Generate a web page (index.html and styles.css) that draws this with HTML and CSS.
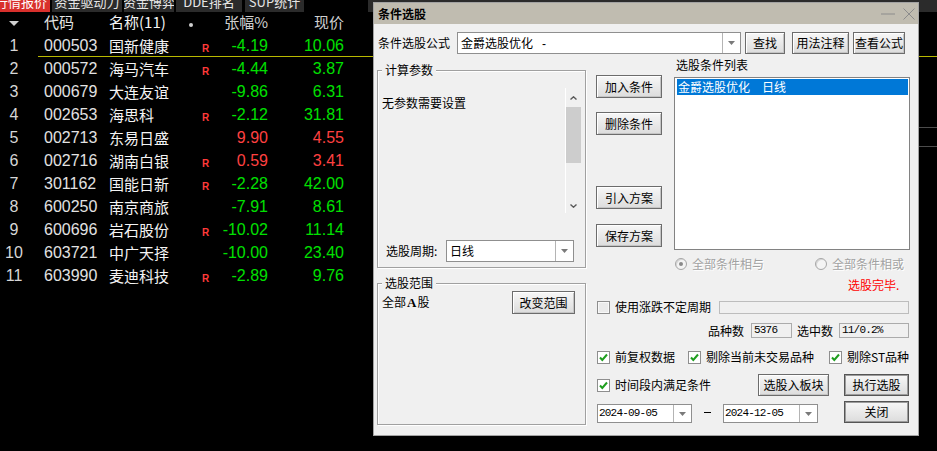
FILE: index.html
```html
<!DOCTYPE html>
<html lang="zh-CN">
<head>
<meta charset="utf-8">
<title>条件选股</title>
<link rel="stylesheet" href="styles.css">
</head>
<body>
<div class="screen">
  <div class="tabbar">
    <div class="tab tab-red w50"><span>行情报价</span></div>
    <div class="tab w70"><span>资金驱动力</span></div>
    <div class="tab w50"><span>资金博弈</span></div>
    <div class="tab w66"><span>DDE排名</span></div>
    <div class="tab w59"><span>SUP统计</span></div>
    <div class="tab-fill"></div>
  </div>

  <div class="content">
    <div class="quotes">
      <div class="qhead">
        <div class="c-idx"><svg class="sort" width="10" height="6" viewBox="0 0 10 6"><path d="M0 0H10L5 5Z" fill="#d0d0d0"/></svg></div>
        <div class="c-code">代码</div>
        <div class="c-name">名称(11)</div>
        <div class="c-r"><span class="dot"></span></div>
        <div class="c-chg">张幅%</div>
        <div class="c-price">现价</div>
      </div>

      <div class="qrow first"><div class="c-idx">1</div><div class="c-code">000503</div><div class="c-name">国新健康</div><div class="c-r">R</div><div class="c-chg dn">-4.19</div><div class="c-price dn">10.06</div></div>
      <div class="selline"></div>
      <div class="qrow"><div class="c-idx">2</div><div class="c-code">000572</div><div class="c-name">海马汽车</div><div class="c-r">R</div><div class="c-chg dn">-4.44</div><div class="c-price dn">3.87</div></div>
      <div class="qrow"><div class="c-idx">3</div><div class="c-code">000679</div><div class="c-name">大连友谊</div><div class="c-r"></div><div class="c-chg dn">-9.86</div><div class="c-price dn">6.31</div></div>
      <div class="qrow"><div class="c-idx">4</div><div class="c-code">002653</div><div class="c-name">海思科</div><div class="c-r">R</div><div class="c-chg dn">-2.12</div><div class="c-price dn">31.81</div></div>
      <div class="qrow"><div class="c-idx">5</div><div class="c-code">002713</div><div class="c-name">东易日盛</div><div class="c-r"></div><div class="c-chg up">9.90</div><div class="c-price up">4.55</div></div>
      <div class="qrow"><div class="c-idx">6</div><div class="c-code">002716</div><div class="c-name">湖南白银</div><div class="c-r">R</div><div class="c-chg up">0.59</div><div class="c-price up">3.41</div></div>
      <div class="qrow"><div class="c-idx">7</div><div class="c-code">301162</div><div class="c-name">国能日新</div><div class="c-r">R</div><div class="c-chg dn">-2.28</div><div class="c-price dn">42.00</div></div>
      <div class="qrow"><div class="c-idx">8</div><div class="c-code">600250</div><div class="c-name">南京商旅</div><div class="c-r"></div><div class="c-chg dn">-7.91</div><div class="c-price dn">8.61</div></div>
      <div class="qrow"><div class="c-idx">9</div><div class="c-code">600696</div><div class="c-name">岩石股份</div><div class="c-r">R</div><div class="c-chg dn">-10.02</div><div class="c-price dn">11.14</div></div>
      <div class="qrow"><div class="c-idx">10</div><div class="c-code">603721</div><div class="c-name">中广天择</div><div class="c-r"></div><div class="c-chg dn">-10.00</div><div class="c-price dn">23.40</div></div>
      <div class="qrow"><div class="c-idx">11</div><div class="c-code">603990</div><div class="c-name">麦迪科技</div><div class="c-r">R</div><div class="c-chg dn">-2.89</div><div class="c-price dn">9.76</div></div>
    </div>
    <div class="panel">
      <div class="pl-yellow"></div>
      <div class="pl-grey g1"></div>
      <div class="pl-grey g2"></div>
    </div>
  </div>

  <div class="dialog">
    <div class="dtitle">
      <span class="dtitle-text">条件选股</span>
      <div class="dctrls">
        <svg width="14" height="2" viewBox="0 0 14 2"><path d="M0 1H14" stroke="#8c8c8c" stroke-width="1"/></svg>
        <svg class="dclose" width="12" height="12" viewBox="0 0 12 12"><path d="M0.5 0.5L11.5 11.5M11.5 0.5L0.5 11.5" stroke="#8c8c8c" stroke-width="1"/></svg>
      </div>
    </div>

    <div class="dbody">
      <div class="rowa">
        <div class="lbl-formula">条件选股公式</div>
        <div class="combo w284">
          <div class="cv">金爵选股优化<span class="fdash">-</span></div>
          <div class="cd"><svg width="7" height="4" viewBox="0 0 7 4"><path d="M0 0H7L3.5 4Z" fill="#7a7a7a"/></svg></div>
        </div>
        <div class="btn b-find">查找</div>
        <div class="btn b-usage">用法注释</div>
        <div class="btn b-view">查看公式</div>
      </div>

      <div class="dmain">
        <div class="lcol">
          <div class="gb gb1">
            <div class="legend">计算参数</div>
            <div class="params">
              <div class="ptext">无参数需要设置</div>
              <div class="scroll">
                <div class="sc-up"><svg width="7" height="4" viewBox="0 0 7 4"><path d="M0.5 3.5L3.5 0.8L6.5 3.5" stroke="#5a5a5a" stroke-width="1.4" fill="none"/></svg></div>
                <div class="thumb"></div>
                <div class="sc-track"></div>
                <div class="sc-dn"><svg width="7" height="4" viewBox="0 0 7 4"><path d="M0.5 0.5L3.5 3.2L6.5 0.5" stroke="#5a5a5a" stroke-width="1.4" fill="none"/></svg></div>
              </div>
            </div>
            <div class="period">
              <div class="plbl">选股周期:</div>
              <div class="combo w128">
                <div class="cv">日线</div>
                <div class="cd"><svg width="7" height="4" viewBox="0 0 7 4"><path d="M0 0H7L3.5 4Z" fill="#7a7a7a"/></svg></div>
              </div>
            </div>
          </div>

          <div class="gb gb2">
            <div class="legend">选股范围</div>
            <div class="scope">
              <div class="stext">全部<b class="bigA">A</b>股</div>
              <div class="btn b-scope">改变范围</div>
            </div>
          </div>
        </div>

        <div class="rarea">
          <div class="rtop">
            <div class="mcol">
              <div class="btn mb1">加入条件</div>
              <div class="btn mb2">删除条件</div>
              <div class="btn mb3">引入方案</div>
              <div class="btn mb4">保存方案</div>
            </div>
            <div class="lcol2">
              <div class="lst-lbl">选股条件列表</div>
              <div class="lst">
                <div class="sel">金爵选股优化　日线</div>
              </div>
              <div class="radios">
                <div class="rad r1"><span class="rcircle on"><span class="rdot"></span></span><span class="rtxt">全部条件相与</span></div>
                <div class="rad"><span class="rcircle"></span><span class="rtxt">全部条件相或</span></div>
              </div>
              <div class="done">选股完毕.</div>
            </div>
          </div>

          <div class="r-ud">
            <span class="cb off"></span><span class="cbl">使用涨跌不定周期</span>
            <div class="field"></div>
          </div>

          <div class="r-cnt">
            <span>品种数</span>
            <div class="nbox nb1">5376</div>
            <span class="lbl-sel">选中数</span>
            <div class="nbox nb2">11/0.2%</div>
          </div>

          <div class="r-opts">
            <div class="og og1"><span class="cb"><svg width="11" height="11" viewBox="0 0 11 11"><path d="M2 5.5L4.3 8L9 2.5" stroke="#1f9e1f" stroke-width="2" fill="none"/></svg></span><span class="cbl">前复权数据</span></div>
            <div class="og og2"><span class="cb"><svg width="11" height="11" viewBox="0 0 11 11"><path d="M2 5.5L4.3 8L9 2.5" stroke="#1f9e1f" stroke-width="2" fill="none"/></svg></span><span class="cbl">剔除当前未交易品种</span></div>
            <div class="og"><span class="cb"><svg width="11" height="11" viewBox="0 0 11 11"><path d="M2 5.5L4.3 8L9 2.5" stroke="#1f9e1f" stroke-width="2" fill="none"/></svg></span><span class="cbl">剔除ST品种</span></div>
          </div>

          <div class="r-time">
            <span class="cb"><svg width="11" height="11" viewBox="0 0 11 11"><path d="M2 5.5L4.3 8L9 2.5" stroke="#1f9e1f" stroke-width="2" fill="none"/></svg></span><span class="cbl">时间段内满足条件</span>
            <div class="btn b-block">选股入板块</div>
            <div class="btn bdef b-run">执行选股</div>
          </div>

          <div class="r-date">
            <div class="combo date">
              <div class="cv mono">2024-09-05</div>
              <div class="cd"><svg width="7" height="4" viewBox="0 0 7 4"><path d="M0 0H7L3.5 4Z" fill="#7a7a7a"/></svg></div>
            </div>
            <div class="dash"></div>
            <div class="combo date">
              <div class="cv mono">2024-12-05</div>
              <div class="cd"><svg width="7" height="4" viewBox="0 0 7 4"><path d="M0 0H7L3.5 4Z" fill="#7a7a7a"/></svg></div>
            </div>
            <div class="btn bdef b-close">关闭</div>
          </div>
        </div>
      </div>
    </div>
  </div>
</div>
</body>
</html>
```

FILE: styles.css
```css
* { box-sizing: border-box; margin: 0; padding: 0; }
html, body { background: #000; }
body {
  width: 937px; height: 451px; overflow: hidden;
  font-family: "Noto Sans CJK SC", "Liberation Sans", sans-serif;
}
.screen { position: relative; width: 937px; height: 451px; overflow: hidden; background: #000; }

/* top tab strip */
.tabbar { display: flex; height: 12px; overflow: hidden; }
.tab {
  height: 12px; overflow: hidden; display: flex; justify-content: center; align-items: flex-start;
  background: #2b2b2b; color: #e6e6e6; font-size: 13px; line-height: 4px; white-space: nowrap;
  margin-right: 2px;
}
.tab span { display: block; }
.tab-red { background: #d9302c; color: #fff; justify-content: flex-end; padding-right: 3px; }
.w50 { width: 50px; flex: none; }
.w70 { width: 70px; flex: none; }
.w66 { width: 66px; flex: none; margin-right: 3px; }
.w59 { width: 59px; flex: none; }
.tab-fill { flex: 1; margin-left: 62px; background: #2b2b2b; }

/* quote list */
.content { display: flex; height: 439px; }
.quotes { width: 380px; flex: none; }
.qhead, .qrow { display: flex; white-space: nowrap; }
.qhead { height: 22px; line-height: 19px; color: #d0d0d0; font-size: 15px; }
.qrow { height: 23px; line-height: 23px; font-family: "Liberation Sans", "Noto Sans CJK SC", sans-serif; font-size: 16px; }
.qrow.first { height: 22px; }
.selline { height: 1px; margin-left: 38px; background: #b9b900; }
.c-idx { width: 28px; text-align: center; color: #d6d6d6; display: flex; justify-content: center; }
.qhead .c-idx { align-items: center; }
.sort { margin-top: 1px; margin-right: 1px; }
.c-code { width: 80px; padding-left: 16px; color: #e2e2e2; }
.c-name { width: 77px; padding-left: 1px; color: #f4f4f4; font-family: "Noto Sans CJK SC", sans-serif; font-size: 15px; }
.qhead .c-code { font-size: 15px; }
.c-r { width: 30px; padding-left: 17px; color: #ff3a3a; font-weight: bold; font-size: 10px; line-height: 29px; font-family: "Liberation Sans", sans-serif; }
.qhead .c-r { padding-left: 4px; display: flex; align-items: center; }
.dot { width: 4px; height: 4px; border-radius: 50%; background: #cfcfcf; margin-top: 3px; }
.c-chg { width: 53px; text-align: right; }
.c-price { width: 76px; text-align: right; }
.dn { color: #00e000; }
.up { color: #ff4040; }

.panel { flex: 1; display: flex; flex-direction: column; }
.pl-yellow { margin-top: 44px; height: 1px; background: #b9b900; }
.pl-grey { height: 1px; background: #4c4c4c; }
.pl-grey.g1 { margin-top: 70px; }
.pl-grey.g2 { margin-top: 18px; }

/* dialog window */
.dialog {
  position: absolute; left: 373px; top: 2px; width: 546px; height: 434px;
  background: #f0f0f0; border: 1px solid #a3a3a3;
  display: flex; flex-direction: column;
  font-size: 12px; color: #000; line-height: 14px;
}
.dtitle { height: 21px; flex: none; background: #c0bcb0; display: flex; align-items: center; padding-left: 4px; }
.dtitle-text { font-weight: bold; font-size: 12px; }
.dctrls { margin-left: auto; display: flex; align-items: center; margin-right: 3px; }
.dclose { margin-left: 8px; }

.dbody { padding: 8px 0 0 3px; display: flex; flex-direction: column; }
.rowa { display: flex; height: 22px; align-items: center; }
.lbl-formula { width: 80px; padding-left: 1px; }

.combo { display: flex; background: #fff; border: 1px solid #8f8f8f; height: 22px; }
.combo .cv { flex: 1; padding-left: 3px; line-height: 20px; white-space: nowrap; overflow: hidden; }
.combo .cd { width: 18px; border-left: 1px solid #b4b4b4; display: flex; align-items: center; justify-content: center; }
.fdash { margin-left: 9px; font-family: "Liberation Sans", sans-serif; }
.w284 { width: 284px; }
.w128 { width: 128px; }

.btn {
  display: flex; align-items: center; justify-content: center; white-space: nowrap;
  border: 1px solid #6c6c6c;
  background: linear-gradient(#f7f7f7, #dcdcdc);
  box-shadow: inset 1px 1px 0 #ffffff, inset -1px -1px 0 #c4c4c4;
  height: 22px;
}
.bdef { border-color: #555; box-shadow: inset 0 0 0 1px #9c9c9c; }
.b-find { width: 40px; margin-left: 4px; }
.b-usage { width: 57px; margin-left: 7px; }
.b-view { width: 52px; margin-left: 4px; }

.dmain { display: flex; }
.lcol { width: 209px; flex: none; display: flex; flex-direction: column; }
.gb {
  border: 1px solid #a0a0a0; box-shadow: inset 1px 1px 0 #fff, 1px 1px 0 #fff;
  display: flex; flex-direction: column;
}
.gb1 { margin-top: 16px; height: 198px; }
.gb2 { margin-top: 15px; height: 142px; }
.legend { align-self: flex-start; margin: -8px 0 0 4px; padding: 0 3px; background: #f0f0f0; line-height: 14px; }

.params { margin-top: 11px; height: 125px; display: flex; }
.ptext { flex: 1; padding: 8px 0 0 4px; line-height: 14px; }
.scroll { width: 16px; margin-right: 4px; border-left: 1px solid #fff; display: flex; flex-direction: column; }
.sc-up { height: 19px; padding-top: 8px; display: flex; justify-content: center; }
.thumb { height: 56px; background: #cdcdcd; }
.sc-track { flex: 1; }
.sc-dn { height: 17px; padding-top: 8px; display: flex; justify-content: center; }

.period { margin-top: 27px; height: 22px; display: flex; align-items: center; }
.plbl { width: 68px; padding-left: 8px; }

.scope { margin-top: 1px; height: 23px; display: flex; align-items: center; }
.stext { padding-left: 4px; }
.bigA { font-family: "Liberation Serif", serif; font-weight: bold; font-size: 13px; padding: 0 1px; }
.b-scope { margin-left: auto; width: 63px; height: 23px; margin-right: 10px; }

.rarea { margin-left: 10px; width: 314px; display: flex; flex-direction: column; }
.rtop { display: flex; }
.mcol { width: 66px; display: flex; flex-direction: column; }
.mcol .btn { height: 23px; }
.mb1 { margin-top: 21px; }
.mb2 { margin-top: 14px; }
.mb3 { margin-top: 51px; }
.mb4 { margin-top: 15px; }
.lcol2 { margin-left: 12px; width: 236px; display: flex; flex-direction: column; }
.lst-lbl { margin-top: 4px; padding-left: 2px; }
.lst { margin-top: 5px; height: 173px; border: 1px solid #828282; background: #fff; padding: 1px 1px 1px 2px; }
.lst .sel { height: 16px; line-height: 16px; background: #0078d7; color: #fff; padding-left: 1px; white-space: nowrap; }
.radios { margin-top: 7px; height: 14px; display: flex; align-items: center; padding-left: 1px; }
.rad { display: flex; align-items: center; }
.rad.r1 { width: 140px; }
.rcircle {
  width: 12px; height: 12px; border-radius: 50%; border: 1px solid #a6a6a6; background: #f4f4f4;
  display: flex; align-items: center; justify-content: center;
  box-shadow: inset 1px 1px 0 #d6d6d6;
}
.rdot { width: 4px; height: 4px; border-radius: 50%; background: #8a8a8a; }
.rtxt { margin-left: 5px; color: #a2a2a2; text-shadow: 1px 1px 0 #fff; }
.done { margin-top: 7px; padding-left: 174px; color: #f00; }

.cb {
  width: 13px; height: 13px; flex: none; border: 1px solid #8e8e8e; background: #fff;
  display: flex; align-items: center; justify-content: center;
}
.cb.off { background: #ebebeb; box-shadow: inset 0 0 0 1px #f8f8f8; }
.cbl { margin-left: 5px; white-space: nowrap; }

.r-ud { margin-top: 8px; height: 14px; display: flex; align-items: center; padding-left: 1px; }
.field { margin-left: auto; margin-right: 1px; width: 190px; height: 13px; border: 1px solid #bdbdbd; background: #f0f0f0; }

.r-cnt { margin-top: 9px; height: 15px; display: flex; align-items: center; justify-content: flex-end; padding-right: 1px; }
.nbox {
  height: 15px; border: 1px solid #ababab; background: #f0f0f0;
  font-family: "Liberation Mono", "DejaVu Sans Mono", monospace; font-size: 11px; letter-spacing: -0.8px; line-height: 13px; padding-left: 2px;
}
.nb1 { width: 41px; margin-left: 7px; }
.lbl-sel { margin-left: 5px; }
.nb2 { width: 70px; margin-left: 6px; }

.r-opts { margin-top: 12px; height: 14px; display: flex; align-items: center; padding-left: 1px; }
.og { display: flex; align-items: center; }
.og1 { width: 91px; }
.og2 { width: 141px; }

.r-time { margin-top: 10px; height: 22px; display: flex; align-items: center; padding: 0 1px; }
.b-block { margin-left: auto; width: 71px; }
.b-run { margin-left: 15px; width: 65px; }

.r-date { margin-top: 5px; height: 22px; display: flex; align-items: flex-end; padding: 0 1px; }
.combo.date { width: 95px; height: 19px; }
.combo.date .cv { line-height: 17px; padding-left: 1px; }
.mono { font-family: "Liberation Mono", "DejaVu Sans Mono", monospace; font-size: 11px; letter-spacing: -0.8px; }
.dash { width: 7px; height: 1px; background: #000; margin: 0 12px; align-self: center; }
.b-close { margin-left: auto; width: 65px; height: 22px; }
```
